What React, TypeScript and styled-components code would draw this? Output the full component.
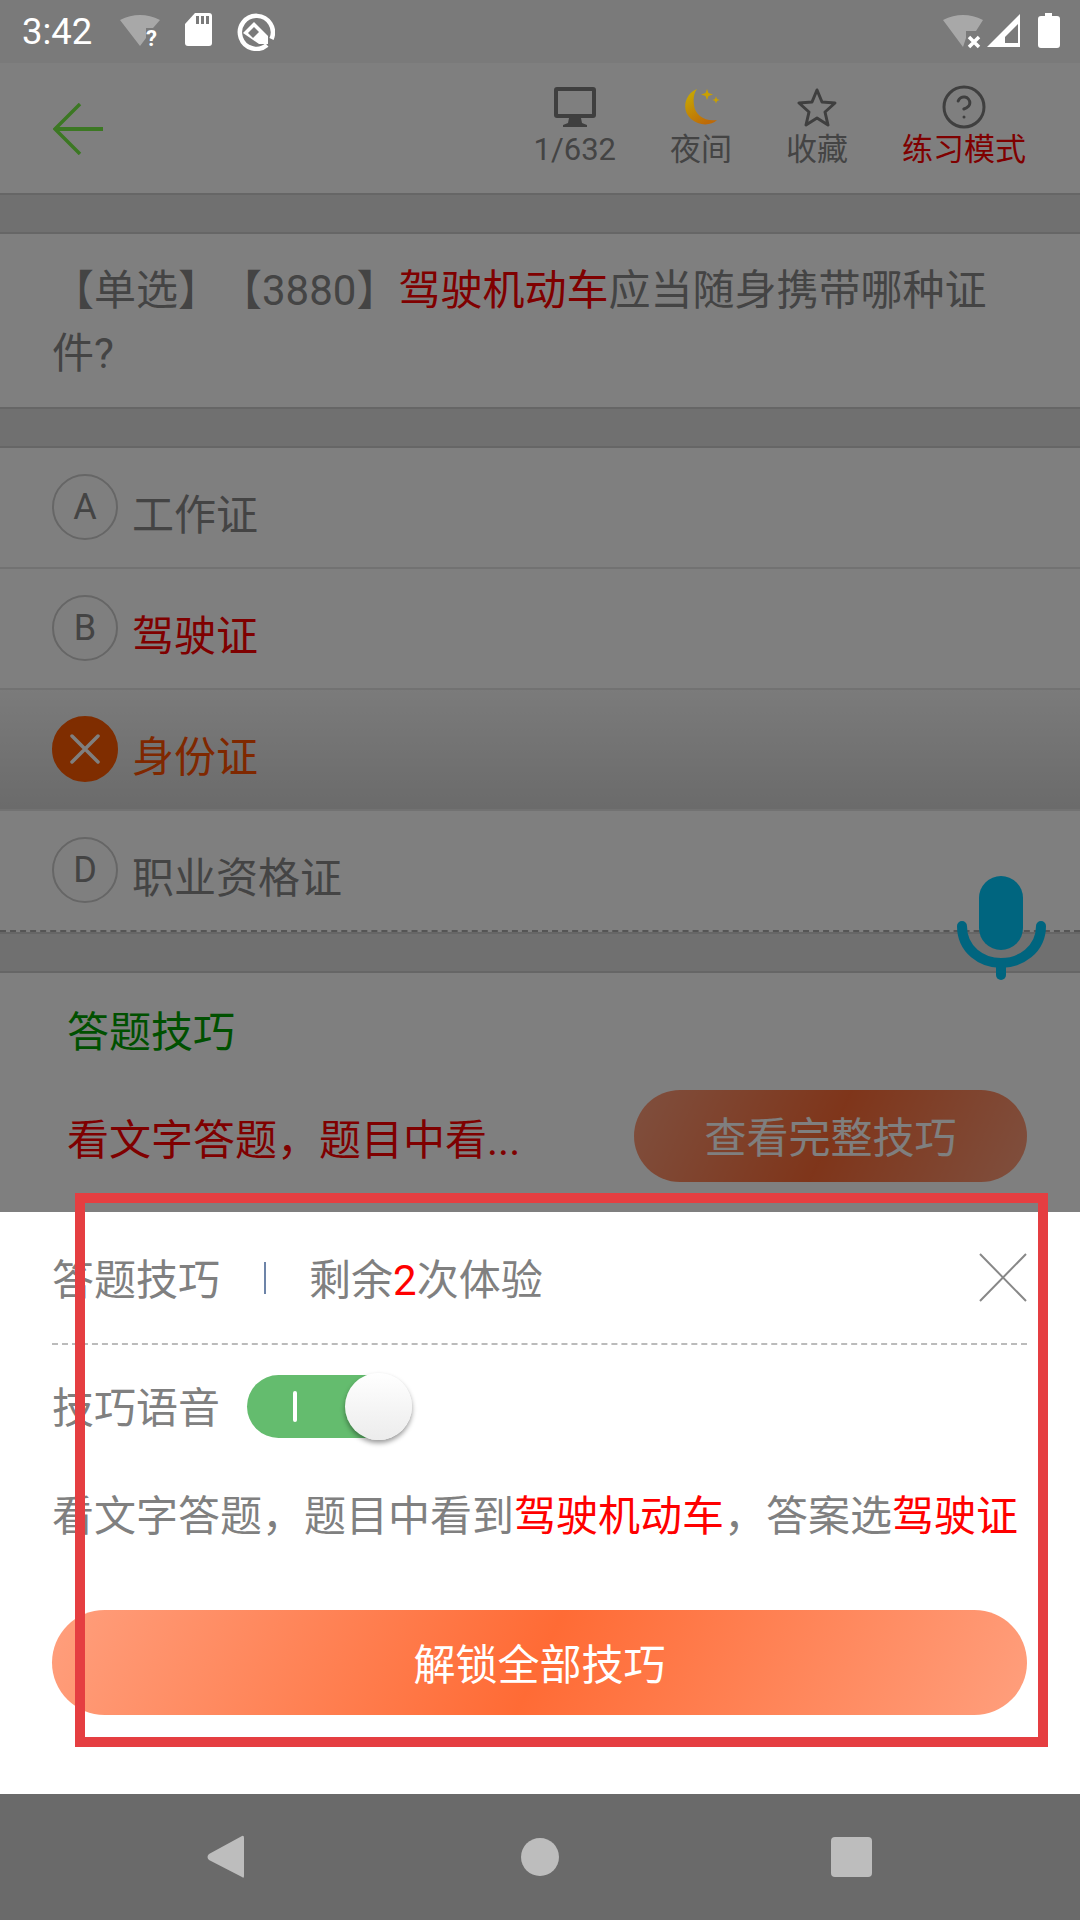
import styled, {createGlobalStyle} from "styled-components";
import {CircleHelp} from "lucide-react";

const brandGradient = "linear-gradient(115deg, #ff9f7d 0%, #ff6b35 50%, #ff9f7d 100%)";

const GlobalStyle = createGlobalStyle`
  html, body {
    margin: 0;
    padding: 0;
    background: #fff;
  }
  body {
    font-family: Roboto, "Noto Sans CJK SC", sans-serif;
    color: #888;
    text-spacing-trim: space-all;
  }
  * {
    box-sizing: border-box;
  }
`;

const Screen = styled.div`
  position: relative;
  display: flex;
  flex-direction: column;
  width: 1080px;
  height: 1920px;
  overflow: hidden;
`;

const StatusBar = styled.div`
  display: flex;
  align-items: center;
  height: 63px;
  flex: none;
  padding: 0 20px 0 22px;
  background: #7a7a7a;
  color: #fff;
`;

const Clock = styled.span`
  font-size: 36.5px;
  line-height: 63px;
  width: 98px;
`;

const StatusIcons = styled.div`
  display: flex;
  align-items: flex-start;
  gap: ${({$gap}: {$gap: number}) => $gap}px;
  height: 63px;
  padding-top: 13px;
`;

const BatteryIcon = styled.svg`
  margin-left: 13px;
`;

const Spacer = styled.div`
  flex: 1;
`;

const Page = styled.div`
  position: relative;
  flex: none;
  height: 1149px;
  background: #fff;
`;

const Scrim = styled.div`
  position: absolute;
  inset: 0;
  z-index: 1;
  background: rgba(0, 0, 0, 0.5);
  pointer-events: none;
`;

const Header = styled.header`
  display: flex;
  height: 130px;
  padding: 24px 54px 0 53px;
`;

const BackButton = styled.div`
  display: flex;
  height: 60px;
  padding-top: 16px;
`;

const HeaderActions = styled.div`
  display: flex;
  gap: 54px;
`;

const HeaderAction = styled.div`
  display: flex;
  flex-direction: column;
  align-items: center;
`;

const ActionIcon = styled.div`
  display: flex;
  align-items: center;
  justify-content: center;
  height: 40px;
  color: #7e7e7e;
`;

const MoonIcon = styled.svg`
  position: relative;
  z-index: 2;
`;

const ActionLabel = styled.span<{$active?: boolean}>`
  font-size: 31px;
  line-height: 46px;
  white-space: nowrap;
  color: ${({$active}) => ($active ? "#ff0000" : "#888")};
`;

const SectionGap = styled.div`
  height: 41px;
  background: #e0e0e0;
  border-top: 2px solid #ccc;
  border-bottom: 2px solid #ccc;
`;

const Question = styled.div`
  height: 173px;
  padding: 25px 53px 0 52px;
  font-size: 42px;
  line-height: 63px;
`;

const Marked = styled.span`
  color: #ff0000;
`;

const OptionRow = styled.div<{$selected?: boolean; $last?: boolean}>`
  display: flex;
  align-items: center;
  gap: 14px;
  height: 121px;
  padding: 0 0 2px 52px;
  border-bottom: 2px ${({$last}) => ($last ? "dashed #aaa" : "solid #e4e4e4")};
  background: ${({$selected}) =>
    $selected ? "linear-gradient(#f6f6f6, #d6d6d6)" : "#fff"};
`;

const OptionBadge = styled.div<{$wrong?: boolean}>`
  display: flex;
  align-items: center;
  justify-content: center;
  width: 66px;
  height: 66px;
  border-radius: 50%;
  border: 2px solid ${({$wrong}) => ($wrong ? "#ff5a00" : "#ccc")};
  background: ${({$wrong}) => ($wrong ? "#ff5a00" : "transparent")};
  font-size: 36px;
  color: #888;
`;

const OptionLabel = styled.span<{$tone?: string}>`
  margin-top: 9px;
  font-size: 42px;
  color: ${({$tone}) => $tone ?? "#888"};
`;

const TipsSection = styled.section`
  height: 240px;
  padding: 30px 53px 0 67px;
`;

const TipsTitle = styled.div`
  font-size: 42px;
  line-height: 60px;
  color: #00a000;
`;

const TipsRow = styled.div`
  display: flex;
  align-items: center;
  justify-content: space-between;
  margin-top: 27px;
`;

const TipsExcerpt = styled.span`
  font-size: 42px;
  color: #ff0000;
`;

const TipsButton = styled.div`
  display: flex;
  align-items: center;
  justify-content: center;
  width: 393px;
  height: 92px;
  padding-bottom: 3px;
  border-radius: 46px;
  background: ${brandGradient};
  color: #fff;
  font-size: 42px;
`;

const MicButton = styled.svg`
  position: absolute;
  z-index: 0;
  left: 957px;
  top: 812px;
`;

const Sheet = styled.section`
  flex: none;
  height: 582px;
  padding: 0 53px 0 52px;
  background: #fff;
  font-size: 42px;
  color: #808080;
`;

const SheetHeader = styled.div`
  display: flex;
  align-items: center;
  height: 133px;
  border-bottom: 2px dashed #bbb;
`;

const SheetTitle = styled.span`
  padding-bottom: 3px;
`;

const SheetDivider = styled.div`
  width: 2px;
  height: 32px;
  margin: 0 43px 0 44px;
  background: #6d84a8;
`;

const VoiceRow = styled.div`
  display: flex;
  align-items: center;
  gap: 27px;
  height: 122px;
`;

const VoiceLabel = styled.span`
  padding-bottom: 3px;
`;

const Toggle = styled.div`
  position: relative;
  width: 150px;
  height: 63px;
  border-radius: 32px;
  background: #64bc6e;
`;

const ToggleMark = styled.div`
  position: absolute;
  left: 46px;
  top: 16px;
  width: 4px;
  height: 31px;
  border-radius: 2px;
  background: #fff;
`;

const ToggleThumb = styled.div`
  position: absolute;
  left: 98px;
  top: -2px;
  width: 67px;
  height: 67px;
  border-radius: 50%;
  background: linear-gradient(#fff, #ececec);
  box-shadow: 0 3px 5px rgba(0, 0, 0, 0.4);
`;

const TipText = styled.div`
  margin-top: 20px;
  line-height: 60px;
  white-space: nowrap;
`;

const UnlockButton = styled.div`
  display: flex;
  align-items: center;
  justify-content: center;
  height: 105px;
  margin-top: 63px;
  padding-bottom: 3px;
  border-radius: 53px;
  background: ${brandGradient};
  color: #fff;
`;

const NavBar = styled.nav`
  display: flex;
  align-items: center;
  gap: 272px;
  flex: none;
  height: 126px;
  padding: 0 0 0 207px;
  background: #6a6a6a;
`;

const Annotation = styled.div`
  position: absolute;
  z-index: 3;
  left: 75px;
  top: 1193px;
  width: 973px;
  height: 554px;
  border: 10px solid #e53e41;
`;

const WifiUnknown = () => (
  <svg width="40" height="40" viewBox="0 0 40 40">
    <path
      d="M0 7Q20 -3 40 7L33 15L26 15L26 25L20 33Z"
      fill="#fff"
      fillOpacity="0.35"
    />
    <text x="26" y="33" fontSize="22" fontWeight="700" fill="#fff">
      ?
    </text>
  </svg>
);

const SdCard = () => (
  <svg width="27" height="33" viewBox="0 0 27 33">
    <path
      d="M10 0H24Q27 0 27 3V30Q27 33 24 33H3Q0 33 0 30V11Z"
      fill="#fff"
    />
    <path d="M11 3h3v8h-3zM16 3h3v8h-3zM21 3h3v8h-3z" fill="#7a7a7a" />
  </svg>
);

const QLogo = () => (
  <svg width="38" height="38" viewBox="0 0 38 38">
    <path
      d="M30 32A16.5 16.5 0 1 1 34.500 26"
      fill="none"
      stroke="#fff"
      strokeWidth="4.500"
    />
    <path d="M6 20L17 9L31 23V31H22Z" fill="#fff" />
    <path d="M11 20L17 14L22 19L16 25Z" fill="#7a7a7a" />
  </svg>
);

const WifiOff = () => (
  <svg width="40" height="36" viewBox="0 0 40 36">
    <path
      d="M0 7Q20 -3 40 7L33 18L23 18L23 25L20 34Z"
      fill="#fff"
      fillOpacity="0.35"
    />
    <path
      d="M26 24L36 34M36 24L26 34"
      stroke="#fff"
      strokeWidth="3.500"
      fill="none"
    />
  </svg>
);

const Signal = () => (
  <svg width="34" height="36" viewBox="0 0 34 36">
    <path d="M33 1V34H0Z" fill="#fff" />
    <path d="M31 11V30H18V24Z" fill="#7a7a7a" />
  </svg>
);

const Battery = () => (
  <BatteryIcon width="22" height="36" viewBox="0 0 22 36">
    <path
      d="M7 0H14V3H19Q22 3 22 6V32Q22 35 19 35H3Q0 35 0 32V6Q0 3 3 3H7Z"
      fill="#fff"
    />
  </BatteryIcon>
);

const BackArrow = () => (
  <svg width="52" height="52" viewBox="0 0 52 52">
    <path
      d="M27 1L2 26L27 51"
      fill="none"
      stroke="#78f046"
      strokeWidth="3.500"
    />
    <path d="M2 26H50" fill="none" stroke="#78f046" strokeWidth="4" />
  </svg>
);

const Monitor = () => (
  <svg width="42" height="40" viewBox="0 0 42 40">
    <rect x="2" y="2" width="38" height="27" rx="1" fill="none" stroke="currentColor" strokeWidth="4" />
    <path d="M15 31H27L28 36L33 38V40H9V38L14 36Z" fill="currentColor" />
  </svg>
);

const Moon = () => (
  <MoonIcon width="40" height="40" viewBox="0 0 40 40">
    <defs>
      <linearGradient id="moon-fill" x1="0" y1="0" x2="0.6" y2="1">
        <stop offset="0" stopColor="#c9b000" />
        <stop offset="1" stopColor="#bd6a08" />
      </linearGradient>
    </defs>
    <path
      d="M16 2C5 6 -1 22 10 32C18 39 30 39 36 33C24 35 14 28 13 18C12 11 13 6 16 2Z"
      fill="url(#moon-fill)"
    />
    <path d="M26 2L27.500 6L32 7.500L27.500 9L26 13L24.500 9L20 7.500L24.500 6Z" fill="#c9a000" />
    <path d="M35 9.500L36 12L38.500 13L36 14L35 16.500L34 14L31.500 13L34 12Z" fill="#c9a000" />
  </MoonIcon>
);

const Star = () => (
  <svg width="44" height="40" viewBox="0 0 44 40">
    <path
      d="M22 3L27 15L40 16L30 25L33 38L22 31L11 38L14 25L4 16L17 15Z"
      fill="none"
      stroke="currentColor"
      strokeWidth="3"
      strokeLinejoin="round"
    />
  </svg>
);

const WrongMark = () => (
  <svg width="30" height="30" viewBox="0 0 30 30">
    <path d="M2 2L28 28M28 2L2 28" stroke="#fff" strokeWidth="3.500" strokeLinecap="round" />
  </svg>
);

const Mic = () => (
  <MicButton width="90" height="106" viewBox="0 0 90 106">
    <rect x="22" y="1" width="44" height="74" rx="22" fill="#00caff" />
    <path
      d="M5 51C5 75 25 88 44 88C63 88 84 75 84 51"
      fill="none"
      stroke="#00caff"
      strokeWidth="10"
      strokeLinecap="round"
    />
    <path d="M44 88V100" stroke="#00caff" strokeWidth="10" strokeLinecap="round" />
  </MicButton>
);

const CloseCross = () => (
  <svg width="48" height="49" viewBox="0 0 48 49">
    <path d="M1 1L47 48M47 1L1 48" stroke="#888" strokeWidth="2" />
  </svg>
);

const NavBack = () => (
  <svg width="42" height="44" viewBox="0 0 42 44">
    <path d="M35 1Q37 0 37 3V41Q37 44 35 42L2 25Q-1 22 2 19Z" fill="#bdbdbd" />
  </svg>
);

const NavHome = () => (
  <svg width="38" height="38" viewBox="0 0 38 38">
    <circle cx="19" cy="19" r="19" fill="#bdbdbd" />
  </svg>
);

const NavRecents = () => (
  <svg width="41" height="40" viewBox="0 0 41 40">
    <rect width="41" height="40" rx="4" fill="#bdbdbd" />
  </svg>
);

const App = () => (
  <Screen>
    <GlobalStyle />
    <StatusBar>
      <Clock>3:42</Clock>
      <StatusIcons $gap={25}>
        <WifiUnknown />
        <SdCard />
        <QLogo />
      </StatusIcons>
      <Spacer />
      <StatusIcons $gap={4}>
        <WifiOff />
        <Signal />
        <Battery />
      </StatusIcons>
    </StatusBar>
    <Page>
      <Header>
        <BackButton>
          <BackArrow />
        </BackButton>
        <Spacer />
        <HeaderActions>
          <HeaderAction>
            <ActionIcon>
              <Monitor />
            </ActionIcon>
            <ActionLabel>1/632</ActionLabel>
          </HeaderAction>
          <HeaderAction>
            <ActionIcon>
              <Moon />
            </ActionIcon>
            <ActionLabel>夜间</ActionLabel>
          </HeaderAction>
          <HeaderAction>
            <ActionIcon>
              <Star />
            </ActionIcon>
            <ActionLabel>收藏</ActionLabel>
          </HeaderAction>
          <HeaderAction>
            <ActionIcon>
              <CircleHelp size={48} strokeWidth={1.5} />
            </ActionIcon>
            <ActionLabel $active>练习模式</ActionLabel>
          </HeaderAction>
        </HeaderActions>
      </Header>
      <SectionGap />
      <Question>
        【单选】【3880】<Marked>驾驶机动车</Marked>应当随身携带哪种证件?
      </Question>
      <SectionGap />
      <OptionRow>
        <OptionBadge>A</OptionBadge>
        <OptionLabel>工作证</OptionLabel>
      </OptionRow>
      <OptionRow>
        <OptionBadge>B</OptionBadge>
        <OptionLabel $tone="#ff0000">驾驶证</OptionLabel>
      </OptionRow>
      <OptionRow $selected>
        <OptionBadge $wrong>
          <WrongMark />
        </OptionBadge>
        <OptionLabel $tone="#ff5000">身份证</OptionLabel>
      </OptionRow>
      <OptionRow $last>
        <OptionBadge>D</OptionBadge>
        <OptionLabel>职业资格证</OptionLabel>
      </OptionRow>
      <SectionGap />
      <TipsSection>
        <TipsTitle>答题技巧</TipsTitle>
        <TipsRow>
          <TipsExcerpt>看文字答题，题目中看...</TipsExcerpt>
          <TipsButton>查看完整技巧</TipsButton>
        </TipsRow>
      </TipsSection>
      <Mic />
      <Scrim />
    </Page>
    <Sheet>
      <SheetHeader>
        <SheetTitle>答题技巧</SheetTitle>
        <SheetDivider />
        <SheetTitle>
          剩余<Marked>2</Marked>次体验
        </SheetTitle>
        <Spacer />
        <CloseCross />
      </SheetHeader>
      <VoiceRow>
        <VoiceLabel>技巧语音</VoiceLabel>
        <Toggle>
          <ToggleMark />
          <ToggleThumb />
        </Toggle>
      </VoiceRow>
      <TipText>
        看文字答题，题目中看到<Marked>驾驶机动车</Marked>，答案选<Marked>驾驶证</Marked>
      </TipText>
      <UnlockButton>解锁全部技巧</UnlockButton>
    </Sheet>
    <NavBar>
      <NavBack />
      <NavHome />
      <NavRecents />
    </NavBar>
    <Annotation />
  </Screen>
);

export default App;
